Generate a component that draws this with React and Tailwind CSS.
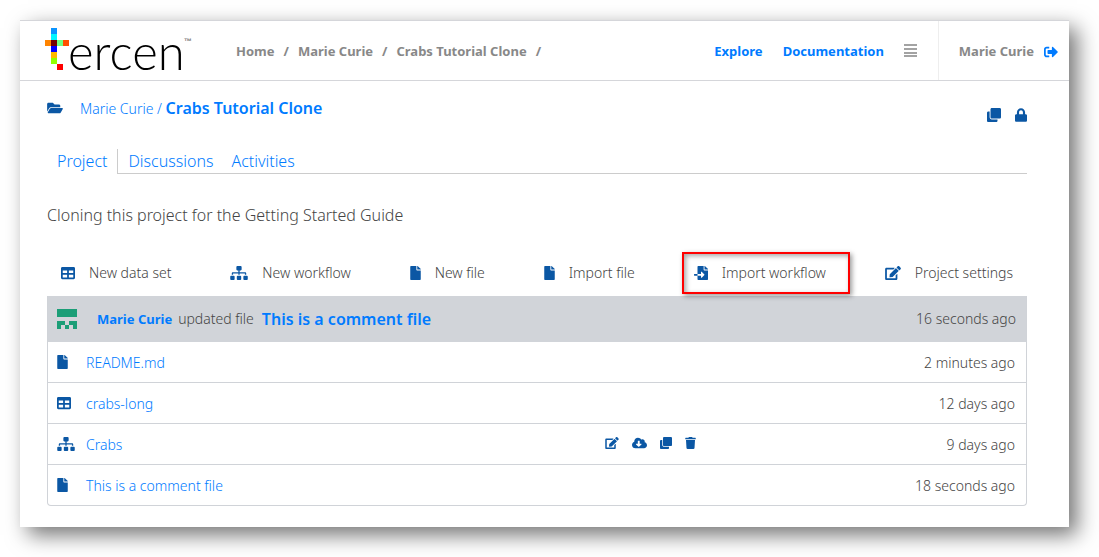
import {
  FaClone,
  FaCloudDownloadAlt,
  FaEdit,
  FaFile,
  FaFileImport,
  FaFolderOpen,
  FaLock,
  FaSignOutAlt,
  FaSitemap,
  FaTable,
  FaTrash,
} from "react-icons/fa";

const LOGO_PIXELS = [
  [6, 0, "#0a94ff"],
  [6, 6, "#00f6ff"],
  [0, 12, "#ff8400"],
  [6, 12, "#720000"],
  [12, 12, "#70ff84"],
  [18, 12, "#ff4e00"],
  [6, 18, "#0000ff"],
  [6, 24, "#ffb900"],
  [6, 30, "#92ff00"],
  [12, 36, "#ff0000"],
];

const ACTIONS = [
  { icon: FaTable, size: "h-3.5 w-3.5", label: "New data set" },
  { icon: FaSitemap, size: "h-3.5 w-[18px]", label: "New workflow" },
  { icon: FaFile, size: "h-3.5 w-[11px]", label: "New file" },
  { icon: FaFile, size: "h-3.5 w-[11px]", label: "Import file" },
  { icon: FaFileImport, size: "h-3.5 w-3.5", label: "Import workflow", highlighted: true },
  { icon: FaEdit, size: "h-3.5 w-4", label: "Project settings" },
];

const FILES = [
  { icon: FaFile, size: "h-3.5 w-[11px]", name: "README.md", age: "2 minutes ago" },
  { icon: FaTable, size: "h-3.5 w-3.5", name: "crabs-long", age: "12 days ago" },
  { icon: FaSitemap, size: "h-3.5 w-[18px]", name: "Crabs", age: "9 days ago", tools: true },
  { icon: FaFile, size: "h-3.5 w-[11px]", name: "This is a comment file", age: "18 seconds ago" },
];

const TOOLS = [
  { icon: FaEdit, size: "h-3 w-3.5", label: "Edit" },
  { icon: FaCloudDownloadAlt, size: "h-3 w-[15px]", label: "Download" },
  { icon: FaClone, size: "h-3 w-3", label: "Clone" },
  { icon: FaTrash, size: "h-3 w-[11px]", label: "Delete" },
];

function Logo() {
  return (
    <a href="#" aria-label="tercen home" className="block shrink-0">
      <svg width="148" height="59" viewBox="0 0 148 59" className="overflow-visible">
        {LOGO_PIXELS.map(([x, y, fill]) => (
          <rect key={`${x}-${y}`} x={x} y={y + 7} width="6" height="6" fill={fill} />
        ))}
        <text x="23" y="49" fontSize="49" fontWeight="300" className="font-['Lato',sans-serif]" fill="#000">
          ercen
        </text>
        <text x="139" y="23" fontSize="8" className="font-['Liberation_Sans',sans-serif]" fill="#777">
          ™
        </text>
      </svg>
    </a>
  );
}

function MenuIcon() {
  return (
    <svg width="13" height="13" viewBox="0 0 13 13" fill="#a3a3a3" shapeRendering="crispEdges">
      {[0, 4, 8, 11].map((y) => (
        <rect key={y} y={y} width="13" height="2" />
      ))}
    </svg>
  );
}

function Avatar() {
  return (
    <svg width="20" height="20" viewBox="0 0 20 20" fill="#1b9e77" shapeRendering="crispEdges">
      <path d="M0 0h20v8H0zM0 12h8v4H4v4H0zM12 12h8v8h-4v-4h-4zM8 16h4v4H8z" />
    </svg>
  );
}

function Header() {
  return (
    <header className="flex h-[61px] items-stretch border-y border-[#d5d6da] text-[13px] font-bold">
      <div className="flex items-center pl-[25px]">
        <Logo />
      </div>
      <nav aria-label="Breadcrumb" className="flex flex-1 items-center gap-[9px] pt-0.5 pl-[43px] text-[#888]">
        <a href="#">Home</a>
        <span>/</span>
        <a href="#">Marie Curie</a>
        <span>/</span>
        <a href="#">Crabs Tutorial Clone</a>
        <span>/</span>
      </nav>
      <nav aria-label="Main" className="flex items-center gap-5 pt-0.5 pr-[21px] text-[#007bff]">
        <a href="#">Explore</a>
        <a href="#">Documentation</a>
        <button type="button" aria-label="Menu" className="pb-[3px]">
          <MenuIcon />
        </button>
      </nav>
      <div className="flex items-center gap-2.5 border-l border-[#eee] pt-0.5 pr-[11px] pl-5 text-[#888]">
        <a href="#">Marie Curie</a>
        <button type="button" aria-label="Sign out" className="text-[#007bff]">
          <FaSignOutAlt className="size-3.5" />
        </button>
      </div>
    </header>
  );
}

function Title() {
  return (
    <div className="flex h-[54px] items-center text-[#007bff]">
      <FaFolderOpen className="h-3.5 w-4 text-[#0b57a4]" />
      <h1 className="flex-1 pl-[17px] text-sm font-light">
        <a href="#">Marie Curie</a> /{" "}
        <a href="#" className="text-base font-semibold">
          Crabs Tutorial Clone
        </a>
      </h1>
      <div className="flex items-center gap-3.5 pt-3.5 text-[#0b57a4]">
        <button type="button" aria-label="Clone project">
          <FaClone className="size-3.5" />
        </button>
        <button type="button" aria-label="Private project">
          <FaLock className="h-3.5 w-3" />
        </button>
      </div>
    </div>
  );
}

function Tabs() {
  return (
    <nav aria-label="Project sections" className="mt-3.5 flex h-[25px] text-base leading-6 font-light text-[#007bff]">
      <a href="#" className="border-r border-[#ccc] px-2.5">
        Project
      </a>
      <div className="flex flex-1 gap-[18px] border-b border-[#ccc] pl-2.5">
        <a href="#">Discussions</a>
        <a href="#">Activities</a>
      </div>
    </nav>
  );
}

function Actions() {
  return (
    <div className="mt-[25px] mb-0.5 flex h-[42px] items-center justify-between px-3.5">
      {ACTIONS.map(({ icon: Icon, size, label, highlighted }) => (
        <button key={label} type="button" className="relative flex items-center gap-3.5 whitespace-nowrap">
          <Icon className={`${size} text-[#0b57a4]`} />
          {label}
          {highlighted && (
            <span className="absolute -inset-y-[11px] -right-6 -left-3 border-2 border-[#f00] shadow-[2px_2px_5px_rgba(0,0,0,0.4),inset_2px_2px_5px_rgba(0,0,0,0.35)]" />
          )}
        </button>
      ))}
    </div>
  );
}

function FileTable() {
  return (
    <table className="w-full border-separate border-spacing-0 rounded-b-sm border border-t-0 border-[#d0d3d8]">
      <thead>
        <tr className="h-[46px] bg-[#d1d4d9] text-left">
          <th colSpan={2} className="pl-[9px] font-light">
            <div className="flex items-center">
              <Avatar />
              <a href="#" className="ml-5 text-[13px] font-bold text-[#007bff]">
                Marie Curie
              </a>
              <span className="ml-1.5">updated file</span>
              <a href="#" className="ml-2 text-base font-semibold text-[#007bff]">
                This is a comment file
              </a>
            </div>
          </th>
          <th className="pr-2.5 text-right font-light">16 seconds ago</th>
        </tr>
      </thead>
      <tbody className="[&>tr:not(:last-child)>td]:border-b [&>tr>td]:border-[#d0d3d8]">
        {FILES.map(({ icon: Icon, size, name, age, tools }) => (
          <tr key={name} className="h-[41px] last:h-10">
            <td className="w-[57%] pl-[9px]">
              <div className="flex items-center">
                <span className="w-[29px] text-[#0b57a4]">
                  <Icon className={size} />
                </span>
                <a href="#" className="pt-0.5 text-[#007bff]">
                  {name}
                </a>
              </div>
            </td>
            <td>
              {tools && (
                <div className="flex items-center gap-[13px] pb-0.5 text-[#0b57a4]">
                  {TOOLS.map(({ icon: Tool, size: toolSize, label }) => (
                    <button key={label} type="button" aria-label={label}>
                      <Tool className={toolSize} />
                    </button>
                  ))}
                </div>
              )}
            </td>
            <td className="pt-0.5 pr-[11px] text-right">{age}</td>
          </tr>
        ))}
      </tbody>
    </table>
  );
}

export default function App() {
  return (
    <div className="min-h-screen bg-white pt-5 pr-[30px] pb-[30px] pl-5 font-['Noto_Sans',sans-serif]">
      <div className="bg-white pb-[21px] shadow-[8px_8px_20px_rgba(0,0,0,0.55)]">
        <Header />
        <main className="pr-[42px] pl-[27px] text-sm font-light text-[#444]">
          <Title />
          <Tabs />
          <p className="mt-[29px] text-base leading-6">Cloning this project for the Getting Started Guide</p>
          <Actions />
          <FileTable />
        </main>
      </div>
    </div>
  );
}
